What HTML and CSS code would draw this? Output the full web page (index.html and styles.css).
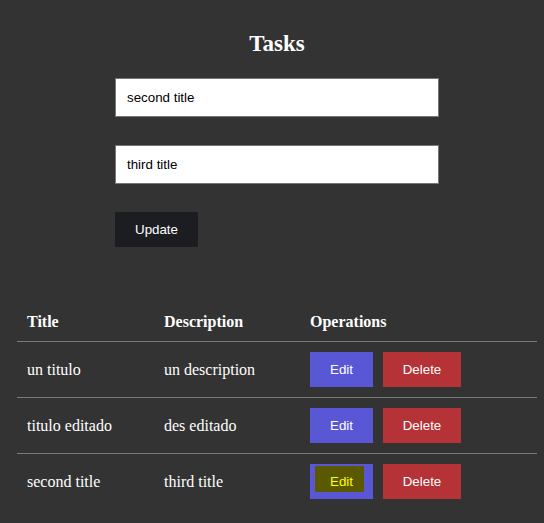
FILE: index.html
```html
<!DOCTYPE html>
<html lang="en">
<head>
<meta charset="utf-8">
<title>Tasks</title>
<link rel="stylesheet" href="styles.css">
</head>
<body>
<div class="page">
  <h2 class="title">Tasks</h2>
  <form class="form">
    <input class="field" type="text" value="second title">
    <input class="field" type="text" value="third title">
    <button class="btn btn-update" type="button">Update</button>
  </form>
  <table class="tasks">
    <thead>
      <tr>
        <th class="col-title">Title</th>
        <th class="col-desc">Description</th>
        <th class="col-ops">Operations</th>
      </tr>
    </thead>
    <tbody>
      <tr>
        <td>un titulo</td>
        <td>un description</td>
        <td><div class="ops"><button class="btn btn-edit" type="button">Edit</button><button class="btn btn-delete" type="button">Delete</button></div></td>
      </tr>
      <tr>
        <td>titulo editado</td>
        <td>des editado</td>
        <td><div class="ops"><button class="btn btn-edit" type="button">Edit</button><button class="btn btn-delete" type="button">Delete</button></div></td>
      </tr>
      <tr>
        <td>second title</td>
        <td>third title</td>
        <td><div class="ops"><button class="btn btn-edit btn-active" type="button"><span class="active-label">Edit</span></button><button class="btn btn-delete" type="button">Delete</button></div></td>
      </tr>
    </tbody>
  </table>
</div>
</body>
</html>
```

FILE: styles.css
```css
html, body {
  margin: 0;
  padding: 0;
  background: #333333;
}

body {
  font-family: "Liberation Serif", "Times New Roman", serif;
  color: #ffffff;
}

.page {
  width: 520px;
  margin-left: 17px;
  padding-top: 30px;
}

.title {
  margin: 0;
  font-size: 23px;
  line-height: 27px;
  font-weight: bold;
  text-align: center;
}

.form {
  width: 324px;
  margin: 21px auto 0;
  display: flex;
  flex-direction: column;
  align-items: flex-start;
  gap: 28px;
}

.field {
  box-sizing: border-box;
  width: 324px;
  height: 39px;
  margin: 0;
  padding: 0 11px;
  border: 1px solid #767676;
  background: #ffffff;
  color: #000000;
  font-family: "Liberation Sans", Arial, sans-serif;
  font-size: 13.33px;
  outline: none;
}

.btn {
  box-sizing: border-box;
  height: 35px;
  margin: 0;
  padding: 0 20px;
  border: none;
  color: #ffffff;
  font-family: "Liberation Sans", Arial, sans-serif;
  font-size: 13.33px;
  cursor: pointer;
}

.btn-update {
  width: 83px;
  padding: 0;
  background: #1c1d21;
}

.tasks {
  margin-top: 56px;
  width: 520px;
  border-collapse: collapse;
  table-layout: fixed;
}

.col-title { width: 137px; }
.col-desc { width: 146px; }
.col-ops { width: 237px; }

.tasks th,
.tasks td {
  box-sizing: border-box;
  padding: 10px;
  text-align: left;
  vertical-align: middle;
  font-size: 16px;
}

.tasks th {
  font-weight: bold;
}

.tasks tbody tr {
  border-top: 1px solid #7a7a7a;
}

.ops {
  display: flex;
  gap: 10px;
}

.btn-edit {
  width: 63px;
  padding: 0;
  background: #5a57d6;
}

.btn-delete {
  width: 78px;
  padding: 0;
  background: #b53337;
}

.btn-active {
  display: flex;
  align-items: flex-start;
  padding: 2px 0 0 5px;
}

.active-label {
  box-sizing: border-box;
  width: 49px;
  height: 26px;
  line-height: 31px;
  padding-left: 15px;
  text-align: left;
  background: #5a5900;
  color: #ffff00;
}
```
